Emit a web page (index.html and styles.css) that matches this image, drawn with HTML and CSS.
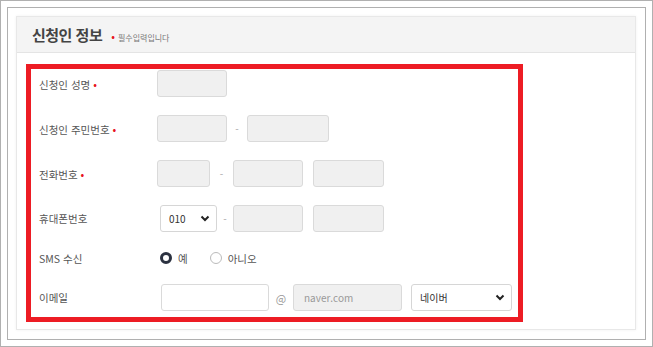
FILE: index.html
```html
<!DOCTYPE html>
<html lang="ko">
<head>
	<meta charset="utf-8">
	<meta name="viewport" content="width=device-width, initial-scale=1">
	<title>신청인 정보</title>
	<link rel="stylesheet" href="styles.css">
</head>
<body>
	<div class="frame">
		<div class="inner">
			<div class="panel">
				<div class="panel-head">
					<h3>신청인 정보</h3>
					<span class="req-note"><i class="dot">•</i>필수입력입니다</span>
				</div>
				<div class="panel-body">
					<div class="box">
						<div class="row">
							<label>신청인 성명 <i class="dot">•</i></label>
							<div class="field"><input class="w70" type="text"></div>
						</div>
						<div class="row">
							<label>신청인 주민번호 <i class="dot">•</i></label>
							<div class="field">
								<input class="w70" type="text"><span class="dash d20">-</span><input class="w82" type="text">
							</div>
						</div>
						<div class="row">
							<label>전화번호 <i class="dot">•</i></label>
							<div class="field">
								<input class="w53" type="text"><span class="dash d23">-</span><input class="w70" type="text"><input class="w71 gap" type="text">
							</div>
						</div>
						<div class="row">
							<label>휴대폰번호</label>
							<div class="field shift">
								<div class="select w57"><span>010</span><svg width="10" height="7" viewBox="0 0 10 7"><path d="M1.5 1.5l3.5 3.5 3.5-3.5" fill="none" stroke="#222" stroke-width="2"/></svg></div>
								<span class="dash d16">-</span><input class="w70" type="text"><input class="w71 gap" type="text">
							</div>
						</div>
						<div class="row sms">
							<label>SMS 수신</label>
							<div class="field shift">
								<span class="radio on"></span><span class="opt">예</span>
								<span class="radio"></span><span class="opt">아니오</span>
							</div>
						</div>
						<div class="row">
							<label>이메일</label>
							<div class="field shift4">
								<input class="w108 white" type="text"><span class="at">@</span><input class="w109" type="text" value="naver.com"><div class="select w101 gap9"><span>네이버</span><svg width="10" height="7" viewBox="0 0 10 7"><path d="M1.5 1.5l3.5 3.5 3.5-3.5" fill="none" stroke="#222" stroke-width="2"/></svg></div>
							</div>
						</div>
					</div>
				</div>
			</div>
		</div>
	</div>
</body>
</html>
```

FILE: styles.css
```css
body{margin: 0;font-family: "Noto Sans CJK KR", "Noto Sans", sans-serif;color: #555;background: #fff;}
.frame{width: 653px;height: 347px;box-sizing: border-box;border: 1px solid #b0b0b0;padding: 6px;}
.inner{height: 100%;box-sizing: border-box;border: 1px solid #b0b0b0;padding: 8px 9px 9px 8px;}
.panel{height: 100%;box-sizing: border-box;border: 1px solid #e8e8e8;box-shadow: 0 0 3px rgba(0,0,0,0.06);}
.panel-head{height: 35px;background: #f4f4f4;border-bottom: 1px solid #e4e4e4;display: flex;align-items: center;padding-left: 15px;}
.panel-head h3{margin: 0;font-size: 15px;font-weight: bold;color: #444;letter-spacing: -0.5px;}
.req-note{font-size: 8px;color: #777;margin-left: 9px;margin-top: 2px;}
.req-note .dot{margin-right: 3px;}
.dot{font-style: normal;color: #e8141e;font-size: 11px;}
.panel-body{padding: 11px 9px 0;}
.box{width: 497px;height: 258px;box-sizing: border-box;border: 5px solid #ed1c24;padding: 1px 0 0 8px;}
.row{display: flex;align-items: center;height: 27px;margin-bottom: 18px;}
.row.sms{height: 16px;}
.row label{width: 118px;flex: none;font-size: 10.5px;color: #555;}
.field{display: flex;align-items: center;height: 100%;}
.field.shift{margin-left: 3px;}
.field.shift4{margin-left: 4px;}
input{height: 27px;box-sizing: border-box;border: 1px solid #dadada;border-radius: 3px;background: #f0f0f0;font-family: inherit;font-size: 10px;color: #999;padding: 0 10px;outline: none;}
input.white{background: #fff;}
.w53{width: 53px;}
.w70{width: 70px;}
.w71{width: 71px;}
.w82{width: 82px;}
.w108{width: 108px;}
.w109{width: 109px;}
.w57{width: 57px;}
.w101{width: 101px;}
.gap{margin-left: 10px;}
.gap9{margin-left: 9px;}
.dash{text-align: center;color: #aaa;font-size: 10px;}
.d16{width: 16px;}
.d20{width: 20px;}
.d23{width: 23px;}
.at{width: 24px;text-align: center;color: #999;font-size: 11px;}
.select{height: 27px;box-sizing: border-box;border: 1px solid #d6d6d6;border-radius: 3px;background: #fff;display: flex;align-items: center;justify-content: space-between;padding: 0 6px 0 8px;font-size: 10px;color: #333;}
.radio{width: 12px;height: 12px;box-sizing: border-box;border-radius: 50%;border: 1px solid #bbb;background: #fff;}
.radio.on{border: 3.5px solid #2b3140;}
.opt{font-size: 10.5px;color: #555;margin: 0 22px 0 6px;}
```
